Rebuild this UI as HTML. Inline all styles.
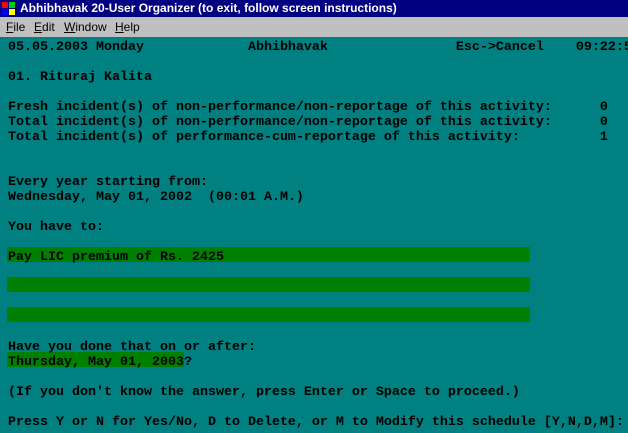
<!DOCTYPE html>
<html><head><style>
html,body{margin:0;padding:0;width:628px;height:433px;overflow:hidden;background:#008080}
#t{position:absolute;left:0;top:0;width:628px;height:17px;background:#000080;color:#fff;font:bold 12px "Liberation Sans",sans-serif;line-height:17px}
#t span{position:absolute;left:20px;top:0}
#m{position:absolute;left:0;top:17px;width:628px;height:20px;background:#c0c0c0;font:12px "Liberation Sans",sans-serif;line-height:20px;color:#000}
#m span{position:absolute;top:0}
pre{position:absolute;left:8px;top:40px;margin:0;font:bold 13.33px "Liberation Mono",monospace;line-height:15px;color:#000;white-space:pre}
.g{position:absolute;background:#008000;height:15px}
</style></head><body>
<div id="t"><svg style="position:absolute;left:2px;top:2px" width="14" height="13"><rect x="0" y="0" width="6" height="6" fill="#f00"/><rect x="7" y="0" width="6" height="6" fill="#0c0"/><rect x="0" y="7" width="6" height="6" fill="#00f"/><rect x="7" y="7" width="6" height="6" fill="#ff0"/></svg><span>Abhibhavak 20-User Organizer (to exit, follow screen instructions)</span></div>
<div id="m"><span style="left:6px"><u>F</u>ile</span><span style="left:34px"><u>E</u>dit</span><span style="left:64px"><u>W</u>indow</span><span style="left:115px"><u>H</u>elp</span></div>
<div class="g" style="left:7px;top:247px;width:523px"></div>
<div class="g" style="left:7px;top:277px;width:523px"></div>
<div class="g" style="left:7px;top:307px;width:523px"></div>
<div class="g" style="left:7px;top:352px;width:177px"></div>
<pre>05.05.2003 Monday             Abhibhavak                Esc->Cancel    09:22:5

01. Rituraj Kalita

Fresh incident(s) of non-performance/non-reportage of this activity:      0
Total incident(s) of non-performance/non-reportage of this activity:      0
Total incident(s) of performance-cum-reportage of this activity:          1


Every year starting from:
Wednesday, May 01, 2002  (00:01 A.M.)

You have to:

Pay LIC premium of Rs. 2425





Have you done that on or after:
Thursday, May 01, 2003?

(If you don't know the answer, press Enter or Space to proceed.)

Press Y or N for Yes/No, D to Delete, or M to Modify this schedule [Y,N,D,M]:</pre>
</body></html>
